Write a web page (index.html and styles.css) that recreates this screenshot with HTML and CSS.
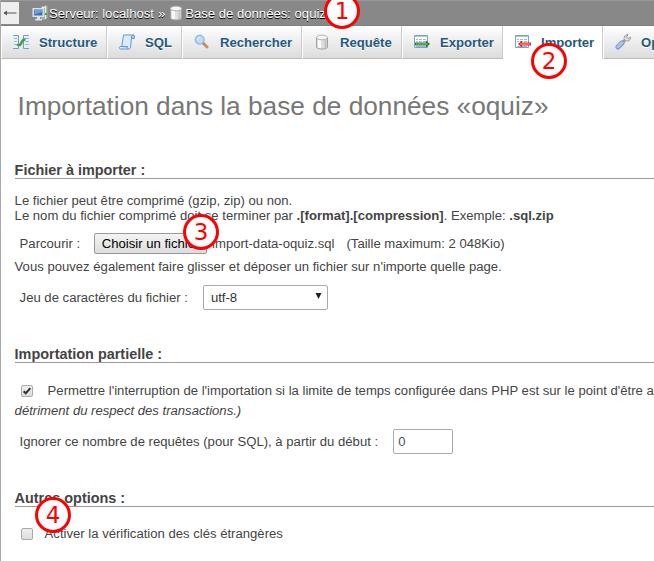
FILE: index.html
```html
<!DOCTYPE html>
<html lang="fr">
<head>
<meta charset="utf-8">
<title>Importation</title>
<link rel="stylesheet" href="styles.css">
</head>
<body>
<div class="page">
<header class="crumbs">
  <a class="back"><svg viewBox="0 0 14 8"><path d="M1 4h12.500" stroke="#555" fill="none"/><path d="M0.500 4l3.500-2.500v5z" fill="#555"/></svg></a>
  <svg class="ico server" viewBox="0 0 16 16"><path d="M9 1.500l5-1 1.500.5v12l-2 1.500H9z" fill="#a3b3a5"/><path d="M13.500 1v13M10 2.500h3" stroke="#e8eee8"/><rect x=".5" y="3" width="11.500" height="9" fill="#dbe2ea"/><rect x="2" y="4.500" width="8.500" height="6" fill="#3d70b8"/><path d="M2.500 5h7.500v2l-7.500 2.500z" fill="#6f9edb"/><path d="M5 12h3v2h2v1.500H3V14h2z" fill="#dde4e6"/><rect x="13" y="8" width="2" height="2" fill="#4aaf36"/></svg>
  <span class="crumb first">Serveur: localhost</span><span class="crumb sep">»</span>
  <svg class="ico db" viewBox="0 0 16 16"><use href="#dbshape"/></svg>
  <span class="crumb">Base de données: oquiz</span>
</header>
<nav class="tabs">
  <a class="tab t1"><svg class="ico" viewBox="0 0 16 16"><path d="M0 1.500h5.500v13H0" fill="#e4effb" stroke="#6f9dcc"/><path d="M16 1.500h-5.500v13H16" fill="#e4effb" stroke="#6f9dcc"/><path d="M1 4.500h3M1 7.500h3M1 10.500h3M12 4.500h4M12 7.500h4M12 10.500h4" stroke="#94b9e0"/><path d="M4 10.500c3 1.500 3.500 0 4.500-2s1.500-3.500 4-3" fill="none" stroke="#479b36" stroke-width="2.400"/></svg>Structure</a>
  <a class="tab t2"><svg class="ico" viewBox="0 0 16 16"><path d="M4.500 1h10c-1.500.5-2 1.500-2 3l-1 9c0 1.500-1 2-2 2H1.500C0 15 0 12.500 1.500 12.500h1.300z" fill="#dcebfb" stroke="#6397d3"/><path d="M12.500 4.500h2.700c.5-2 .3-3.500-.7-3.500s-1.800 1-2 3.500M1.500 12.500h7c-.5 1.500 0 2.500 1 2.500" fill="#b7d3f2" stroke="#6397d3"/></svg>SQL</a>
  <a class="tab t3"><svg class="ico" viewBox="0 0 16 16"><path d="M9 9l4 4" stroke="#d08e48" stroke-width="3" stroke-linecap="round"/><path d="M8.500 8.500l1.500 1.500" stroke="#888" stroke-width="2"/><circle cx="5.700" cy="5.700" r="4.400" fill="#c1dcfa" stroke="#91b4e0" stroke-width="1.300"/><path d="M3.500 5.500c0-1.500 1-2 2-2" stroke="#fff" fill="none"/></svg>Rechercher</a>
  <a class="tab t4"><svg class="ico" viewBox="0 0 16 16"><g id="dbshape"><path d="M2.500 3.500v9.500c0 2.700 11 2.700 11 0V3.500z" fill="#dedede" stroke="#a0a0a0"/><path d="M4 5v8.500c1 .5 2 .7 3 .8V6z" fill="#fafafa"/><path d="M10.500 6v8.300l2-.7V5z" fill="#c1c1c1"/><ellipse cx="8" cy="3.500" rx="5.500" ry="2.300" fill="#f7f7f7" stroke="#b4b4b4"/></g></svg>Requête</a>
  <a class="tab t5"><svg class="ico" viewBox="0 0 16 16"><path d="M.5 1.500h13v12H.5z" fill="#fff" stroke="#7b9fce"/><path d="M1 2.500h12" stroke="#a9d0ac"/><path d="M2 5.500h2M5 5.500h3M9 5.500h3M2 7.500h2M5 7.500h3M9 7.500h3M2 12.500h10" stroke="#9bb8df"/><path d="M1 8.500h11V6.500l4 3.500-4 3.500v-2H1z" fill="#28782c"/><path d="M2 10h12" stroke="#91cc82"/></svg>Exporter</a>
  <a class="tab t6 active"><svg class="ico" viewBox="0 0 16 16"><path d="M.5 1.500h13v12H.5z" fill="#fff" stroke="#7b9fce"/><path d="M1 2.500h12" stroke="#a9d0ac"/><path d="M2 5.500h2M5 5.500h3M9 5.500h3M2 7.500h2M5 7.500h3M9 7.500h3M2 12.500h10" stroke="#9bb8df"/><path d="M16 8.500H7V6.500L3 10l4 3.500v-2h9z" fill="#dc2626"/><path d="M5 10h10" stroke="#ffaaa2"/></svg>Importer</a>
  <a class="tab t7"><svg class="ico" viewBox="0 0 16 16"><path d="M7.500 8.500l4-4" stroke="#999" stroke-width="3"/><path d="M9 4.500c0-2 1.500-4 4-4l-1.500 2.500 1.500 1.500L15.700 3c.3 2.500-1.700 4.500-4.200 4" fill="#ddd" stroke="#999"/><path d="M3 13l4-4" stroke="#7896d2" stroke-width="5" stroke-linecap="round"/><path d="M3 12.800l4-4" stroke="#abc4f2" stroke-width="3" stroke-linecap="round"/></svg>Opérations</a>
</nav>
<main>
  <h2>Importation dans la base de données «oquiz»</h2>
  <section class="s1">
    <h3>Fichier à importer :</h3>
    <p class="intro">Le fichier peut être comprimé (gzip, zip) ou non.<br>Le nom du fichier comprimé doit se terminer par <b>.[format].[compression]</b>. Exemple: <b>.sql.zip</b></p>
    <div class="row file"><span>Parcourir :</span><button class="choose">Choisir un fichier</button><span class="name">import-data-oquiz.sql</span><span class="max">(Taille maximum: 2 048Kio)</span></div>
    <p class="drop">Vous pouvez également faire glisser et déposer un fichier sur n'importe quelle page.</p>
    <div class="row charset"><span>Jeu de caractères du fichier :</span><div class="select"><span>utf-8</span><svg viewBox="0 0 7 7"><path d="M.5 0h6L3.500 6z" fill="#222"/></svg></div></div>
  </section>
  <section class="s2">
    <h3>Importation partielle :</h3>
    <div class="row partial"><span class="check"><svg viewBox="0 0 12 12"><path d="M2 6.200l2.500 2.600L10 2.500" fill="none" stroke="#333" stroke-width="2.500"/></svg></span><span>Permettre l'interruption de l'importation si la limite de temps configurée dans PHP est sur le point d'être atteinte.</span></div>
    <p class="detail"><i>détriment du respect des transactions.)</i></p>
    <div class="row skip"><span>Ignorer ce nombre de requêtes (pour SQL), à partir du début :</span><span class="number">0</span></div>
  </section>
  <section class="s3">
    <h3>Autres options :</h3>
    <div class="row keys"><span class="check"></span><span>Activer la vérification des clés étrangères</span></div>
  </section>
</main>
</div>
<span class="mark m1">1</span><span class="mark m2">2</span><span class="mark m3">3</span><span class="mark m4">4</span>
</body>
</html>
```
FILE: styles.css
```css
* { box-sizing: border-box; }
body { margin: 0; width: 654px; height: 561px; overflow: hidden; position: relative; background: #fff; color: #444; font: 13.12px/15px "Liberation Sans", Arial, sans-serif; white-space: nowrap; }
.page { height: 561px; border-left: 1px solid #aaa; overflow: hidden; }
h2, h3, p { margin: 0; }
.ico { width: 16px; height: 16px; flex: none; }
.crumbs { height: 26px; background: #888; border-top: 1px solid #999; border-bottom: 1px solid #808080; display: flex; align-items: center; color: #fff; text-shadow: 0 1px 0 #000; }
.back { display: flex; align-items: center; justify-content: center; width: 18px; height: 22px; background: #eee; }
.back svg { width: 14px; height: 8px; }
.server { margin-left: 13px; }
.first { margin-left: 1px; }
.sep { margin-left: 4px; }
.db { margin: 0 1px 0 3px; }
.tabs { display: flex; height: 33px; width: 760px; }
.tab { display: flex; flex: none; align-items: center; padding-left: 11px; gap: 10px; font-weight: bold; color: #235a81; text-shadow: 0 1px 0 #fff; background: linear-gradient(#fff, #dcdcdc); border-right: 1px solid #ccc; border-left: 1px solid #fff; border-bottom: 1px solid #bbb; }
.t1 { width: 106px; }
.t2 { width: 75px; }
.t3 { width: 120px; }
.t4 { width: 100px; }
.t5 { width: 101px; }
.t6 { width: 100px; }
.t7 { width: 120px; }
.active { background: #fff; border-bottom-color: #fff; }
main { padding-left: 13.6px; }
h2 { font-size: 26.24px; line-height: 30px; font-weight: normal; color: #777; margin: 32px 0 0 3px; }
h3 { font-size: 14.43px; line-height: 19px; height: 18px; border-bottom: 1px solid #999; }
.s1 { padding-top: 40px; }
.intro { margin-top: 14px; }
.row { display: flex; align-items: center; }
.file { height: 21px; margin: 10px 0 0 5px; }
.choose { width: 113px; height: 21px; margin: 0 0 0 14px; padding: 0; border: 1px solid #999; border-radius: 2px; background: linear-gradient(#f4f4f4, #ddd); color: #000; font: inherit; }
.name { margin-left: 5px; }
.max { margin-left: 12px; }
.drop { margin-top: 5px; }
.charset { height: 26px; margin: 10px 0 0 5px; }
.select { display: flex; align-items: center; justify-content: space-between; width: 125px; height: 25px; margin-left: 15px; padding: 0 5px 0 7px; border: 1px solid #aaa; border-radius: 2px; color: #333; }
.select svg { width: 7px; height: 7px; margin-bottom: 2px; }
.s2 { padding-top: 35px; }
.partial { height: 15px; margin: 20px 0 0 6px; }
.check { width: 12px; height: 12px; flex: none; margin-right: 15px; border: 1px solid #aaa; border-radius: 2px; background: linear-gradient(#eee, #ddd); }
.check svg { display: block; width: 10px; height: 10px; }
.detail { margin-top: 5px; }
.skip { height: 25px; margin: 11px 0 0 5px; }
.number { width: 60px; height: 25px; margin-left: 15px; padding-left: 4px; line-height: 23px; border: 1px solid #aaa; border-radius: 2px; color: #555; }
.s3 { padding-top: 35px; }
.keys { height: 15px; margin: 19px 0 0 6px; }
.keys .check { margin-right: 12px; }
.mark { position: absolute; width: 36px; height: 36px; border: 3px solid #f00; border-radius: 50%; background: #fff; color: #f00; font: 23px/30px "DejaVu Sans", sans-serif; text-align: center; }
.m1 { left: 324px; top: -7px; }
.m2 { left: 531px; top: 43px; }
.m3 { left: 183px; top: 214px; }
.m4 { left: 35px; top: 497px; }
```
